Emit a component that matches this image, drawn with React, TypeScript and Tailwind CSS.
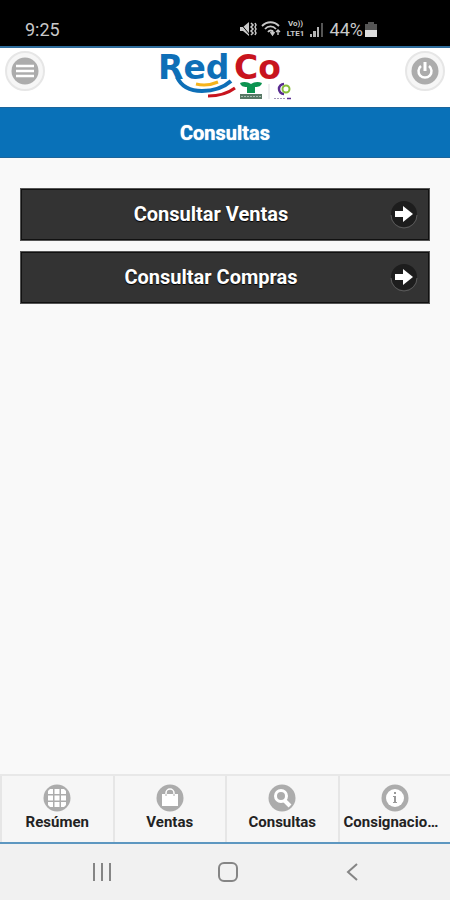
import React from 'react';

interface QueryButtonProps {
  label: string;
}

interface TabProps {
  label: string;
  icon: React.ReactNode;
}

const Logo: React.FC = () => (
  <svg width="142" height="56" viewBox="0 0 142 56" role="img" aria-label="RedCo">
    <g fontFamily="'DejaVu Sans', sans-serif" fontWeight="700" fontSize="33">
      <text x="4" y="31" fill="#0e6fb7">Red</text>
      <text x="80" y="31" fill="#c8141e">Co</text>
    </g>
    <path d="M23 29C27 38 36 43 48 43C60 43 69 40 77 33" fill="none" stroke="#0e6fb7" strokeWidth="4" />
    <path d="M42 36c8 2 15 1 22-2" fill="none" stroke="#f5b31c" strokeWidth="3" />
    <path d="M54 48c10 0 19-2 27-8" fill="none" stroke="#c8141e" strokeWidth="3" />
    <path d="M86 35c4-2 8-1 11 1 3-2 7-3 11-1-1 3-3 4-7 4v6h-8v-6c-4 0-6-1-7-4z" fill="#0c9350" />
    <rect x="86" y="46" width="22" height="5" fill="#587865" />
    <path d="M87 48.5h20" stroke="#a9bdb0" strokeDasharray="2 1" />
    <path d="M115 36v15" stroke="#dddde2" />
    <path d="M130 36a5 5 0 1 0 0 10" fill="none" stroke="#5a2c91" strokeWidth="2.5" />
    <circle cx="132" cy="41" r="3.5" fill="none" stroke="#86bd3a" strokeWidth="2" />
    <path d="M120 50.5h11" stroke="#a497b8" strokeDasharray="2 1" />
    <path d="M133 50.5h4" stroke="#5a2c91" strokeWidth="1.5" />
  </svg>
);

const StatusBar: React.FC = () => (
  <div className="flex h-[46px] items-center justify-between bg-black pt-3 pr-[73px] pl-[25px] text-[18px] text-[#c9c9c9]">
    <span>9:25</span>
    <div className="flex items-center gap-1">
      <svg width="18" height="16" viewBox="0 0 18 16" fill="none" stroke="#c9c9c9" strokeWidth="1.5">
        <path d="M1 6h3l6-5v14l-6-5H1z" fill="#c9c9c9" stroke="none" />
        <path d="M1 2l10 12" stroke="#000" strokeWidth="1" />
        <path d="M12 2l2 2-2 2 2 2-2 2 2 2-2 2M16 2l1 2-1 2 1 2-1 2 1 2-1 2" />
      </svg>
      <svg width="21" height="16" viewBox="0 0 21 16" fill="none" stroke="#c9c9c9" strokeWidth="1.8">
        <path d="M1 5c5-5 12-5 17 0M4 8c3-3.5 8-3.5 11 0M7 11c1.5-2 4-2 5 0" />
        <path d="M9.5 11l2 3 2-3M11.5 9v5M17 14v-5M15 11l2-2 2 2" strokeWidth="1.4" />
      </svg>
      <div className="flex w-[20px] flex-col text-center text-[8px] leading-[10px] font-bold">
        <span>Vo))</span>
        <span>LTE1</span>
      </div>
      <svg width="14" height="15" viewBox="0 0 14 15" fill="#b5b5b5">
        <path d="M0 12h2v3H0zM3 9h3v6H3zM7 5h2v10H7z" />
        <path d="M11 1h2v14h-2z" fill="#555" />
      </svg>
      <div className="flex items-center gap-[2px] pl-[2px]">
        <span>44%</span>
        <svg width="12" height="15" viewBox="0 0 12 15">
          <path d="M3 0h6v2h3v6H0V2h3z" fill="#555" />
          <path d="M0 8h12v7H0z" fill="#dedede" />
        </svg>
      </div>
    </div>
  </div>
);

const QueryButton: React.FC<QueryButtonProps> = ({ label }) => (
  <button
    type="button"
    className="flex h-[53px] w-full items-center border-2 border-[#111] bg-[#333] px-2.5 text-[20px] font-bold text-white outline outline-1 -outline-offset-1 outline-[#555] text-shadow-[0_1px_1px_#000]"
  >
    <span className="flex-1 pb-0.5">{label}</span>
    <svg width="28" height="28" viewBox="0 0 28 28">
      <circle cx="14" cy="13" r="13" fill="#1d1d1d" />
      <path d="M1 14a13 13 0 0 0 26 0" fill="none" stroke="#5a5a5a" />
      <path d="M5 10h8V5l10 8-10 8v-5H5z" fill="#fff" />
    </svg>
  </button>
);

const Tab: React.FC<TabProps> = ({ label, icon }) => (
  <button
    type="button"
    className="flex min-w-0 flex-col items-center border-l-2 border-[#e6e6e6] bg-[#f6f6f6] pt-2 text-[15px] leading-5 font-bold text-[#222]"
  >
    <svg width="28" height="28" viewBox="0 0 28 28">
      <circle cx="14" cy="14" r="13.5" fill="#acacac" />
      {icon}
    </svg>
    <span className="w-full truncate px-1">{label}</span>
  </button>
);

const tabs: TabProps[] = [
  {
    label: 'Resúmen',
    icon: (
      <path
        d="M7 5h3v5H5V7zM11.5 5h5v5h-5zM18 5h3l2 2v3h-5zM5 11.5h5v5H5zM11.5 11.5h5v5h-5zM18 11.5h5v5h-5zM5 18h5v5H7l-2-2zM11.5 18h5v5h-5zM18 18h5v3l-2 2h-3z"
        fill="#fff"
      />
    ),
  },
  {
    label: 'Ventas',
    icon: (
      <>
        <path d="M6 10h16v12H6z" fill="#fff" />
        <path d="M10 11V9a4 4 0 0 1 8 0v2" fill="none" stroke="#fff" strokeWidth="1.5" />
        <path d="M10 10v2M18 10v2" stroke="#acacac" />
      </>
    ),
  },
  {
    label: 'Consultas',
    icon: (
      <>
        <circle cx="13" cy="12" r="5.5" fill="none" stroke="#fff" strokeWidth="3" />
        <path d="M16 16l6 6" stroke="#fff" strokeWidth="4" />
      </>
    ),
  },
  {
    label: 'Consignaciones',
    icon: (
      <>
        <circle cx="14" cy="14" r="9" fill="#fff" />
        <path d="M13 8h2v2h-2zM12 12h3v6h1v1h-4v-1h1v-5h-1z" fill="#999" />
      </>
    ),
  },
];

const App: React.FC = () => {
  return (
    <div className="flex min-h-screen flex-col bg-[#f9f9f9] font-['Roboto','Liberation_Sans',sans-serif]">
      <StatusBar />

      <header className="flex h-[61px] items-start justify-between border-t-2 border-[#2f6d9c] bg-white px-[5px]">
        <button
          type="button"
          aria-label="Menú"
          className="mt-[3px] flex size-10 items-center justify-center rounded-full border-2 border-[#e6e6e6] bg-[#f6f6f6]"
        >
          <svg width="28" height="28" viewBox="0 0 28 28">
            <circle cx="14" cy="14" r="13.5" fill="#acacac" />
            <path d="M5 9h18M5 14h18M5 19h18" stroke="#fff" strokeWidth="2.5" />
          </svg>
        </button>
        <Logo />
        <button
          type="button"
          aria-label="Salir"
          className="mt-[3px] flex size-10 items-center justify-center rounded-full border-2 border-[#e6e6e6] bg-[#f6f6f6]"
        >
          <svg width="28" height="28" viewBox="0 0 28 28" fill="none" stroke="#fff">
            <circle cx="14" cy="14" r="13.5" fill="#acacac" stroke="none" />
            <path d="M10 9a6.5 6.5 0 1 0 8 0" strokeWidth="2.5" />
            <path d="M14 5v9" strokeWidth="3" />
          </svg>
        </button>
      </header>

      <h1 className="flex h-[51px] items-center justify-center border-y border-[#1c659b] bg-[#0971b8] text-[20px] font-bold text-white text-shadow-[0_0_1px_#fff]">
        Consultas
      </h1>

      <main className="flex flex-1 flex-col gap-2.5 px-5 pt-[30px]">
        <QueryButton label="Consultar Ventas" />
        <QueryButton label="Consultar Compras" />
      </main>

      <nav className="grid h-[70px] grid-cols-4 border-t-2 border-b-2 border-t-[#e8e8e8] border-b-[#5d97c0]">
        {tabs.map((tab) => (
          <Tab key={tab.label} label={tab.label} icon={tab.icon} />
        ))}
      </nav>

      <footer className="flex h-14 items-center justify-between bg-[#f1f1f1] pr-[86px] pl-[91px] text-[#858585]">
        <button type="button" aria-label="Recientes">
          <svg width="22" height="22" viewBox="0 0 22 22" stroke="currentColor" strokeWidth="2">
            <path d="M3 2v18M11 2v18M19 2v18" />
          </svg>
        </button>
        <button type="button" aria-label="Inicio">
          <svg width="22" height="22" viewBox="0 0 22 22" fill="none" stroke="currentColor" strokeWidth="2">
            <rect x="2" y="2" width="18" height="18" rx="5" />
          </svg>
        </button>
        <button type="button" aria-label="Atrás">
          <svg width="22" height="22" viewBox="0 0 22 22" fill="none" stroke="currentColor" strokeWidth="2">
            <path d="M15 3l-9 8 9 8" />
          </svg>
        </button>
      </footer>
    </div>
  );
};

export default App;
